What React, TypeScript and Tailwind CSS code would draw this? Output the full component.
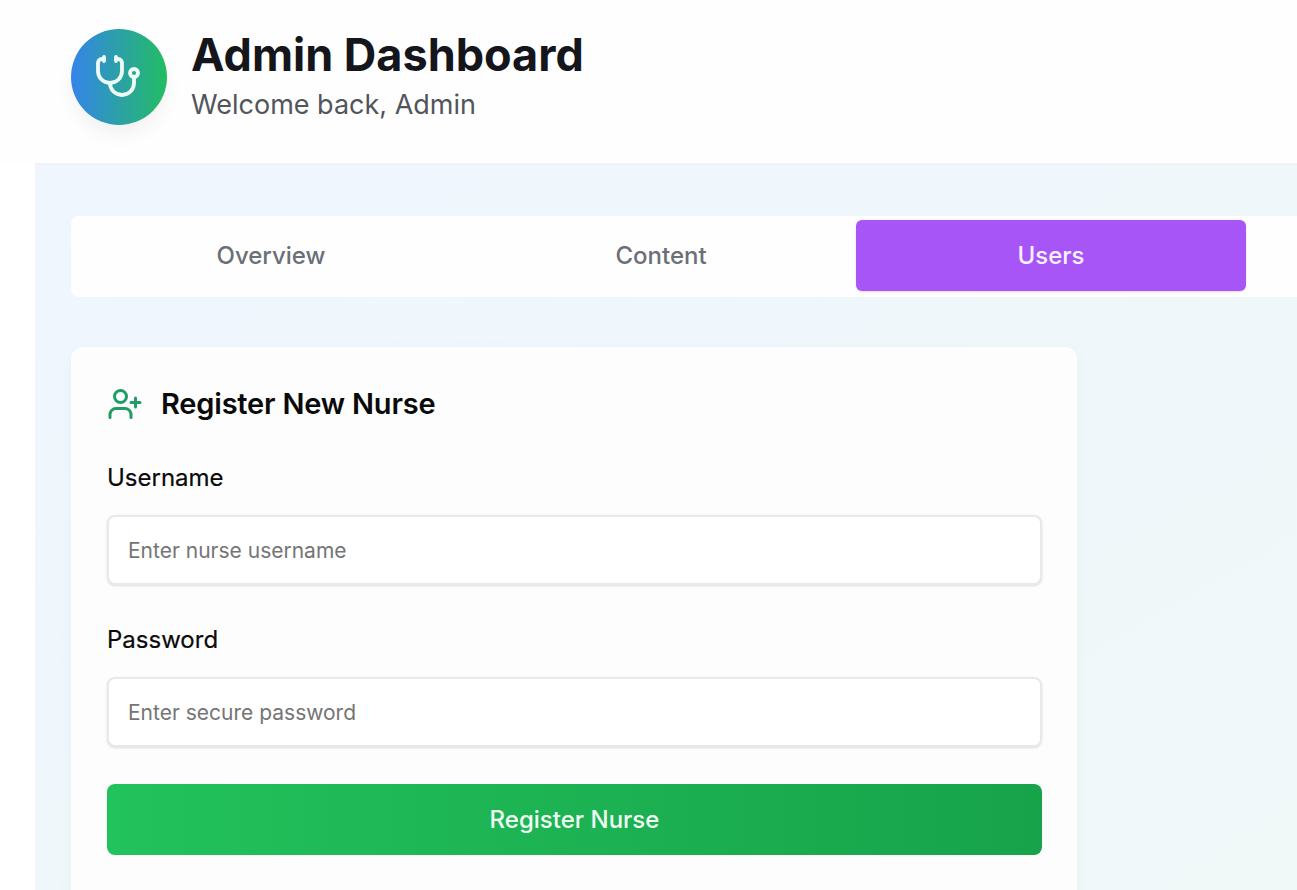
import { Stethoscope, UserPlus } from 'lucide-react';

function Field({ label, placeholder }: { label: string; placeholder: string }) {
  return (
    <div className="flex flex-col">
      <label className="text-[24px] leading-[32px] font-normal text-[#0a0a0a] mb-[21px] [-webkit-text-stroke:0.2px_#0a0a0a]">{label}</label>
      <input
        placeholder={placeholder}
        className="h-[70px] w-full rounded-lg border-2 border-[#e8e9eb] bg-white px-[19px] text-[21px] text-[#111827] placeholder:text-[#757575] shadow-sm outline-none"
      />
    </div>
  );
}

export default function App() {
  return (
    <div className="h-[890px] w-full overflow-hidden bg-white font-['Inter',sans-serif]">
      <header className="h-[163px] flex items-start gap-[24px] pl-[71px] pt-[29px] bg-[#fefefe]">
        <div className="w-[96px] h-[96px] rounded-full bg-linear-to-r/srgb from-[#3584ea] to-[#22bd62] flex items-center justify-center shadow-[0_10px_18px_rgba(0,0,0,0.05)]">
          <Stethoscope className="w-[48px] h-[48px] text-[#eefaf6] -ml-[2px]" strokeWidth={1.9} />
        </div>
        <div className="flex flex-col">
          <h1 className="text-[45px] leading-[52px] font-bold text-[#14161b]">Admin Dashboard</h1>
          <p className="text-[27px] leading-[36px] text-[#52555c] mt-[6px]">Welcome back, Admin</p>
        </div>
      </header>
      <main className="ml-[35px] h-[727px] border-t-2 border-[#f1f2f4] bg-gradient-to-br from-[#eff6fe] to-[#f1f8f8] pl-[36px] pt-[51px]">
        <div className="h-[81px] bg-[#fefefe] rounded-l-lg flex items-start pt-[4px] pl-[5px]">
          <button className="w-[390px] h-[71px] text-[24px] font-medium text-[#6b6f76]">Overview</button>
          <button className="w-[390px] h-[71px] text-[24px] font-medium text-[#6b6f76]">Content</button>
          <button className="w-[390px] h-[71px] rounded-md bg-[#a855f7] text-[24px] font-medium text-[#fdf4ff] shadow-sm">Users</button>
        </div>
        <section className="mt-[50px] w-[1006px] h-[600px] rounded-xl bg-[#fdfdfe] pl-[36px] pr-[35px] pt-[37px] shadow-[0_4px_16px_rgba(0,0,0,0.03)]">
          <div className="flex items-center gap-[18px] h-[40px]">
            <UserPlus className="w-[36px] h-[36px] text-[#1f9d63]" strokeWidth={2} />
            <h2 className="text-[29px] leading-[40px] font-semibold tracking-[-0.2px] text-[#0a0a0a]">Register New Nurse</h2>
          </div>
          <div className="mt-[38px] flex flex-col gap-[39px]">
            <Field label="Username" placeholder="Enter nurse username" />
            <Field label="Password" placeholder="Enter secure password" />
          </div>
          <button className="mt-[37px] w-full h-[71px] rounded-lg bg-gradient-to-r from-[#22c25c] to-[#17a34a] text-[24px] font-medium text-[#f0fdf4]">
            Register Nurse
          </button>
        </section>
      </main>
    </div>
  );
}
